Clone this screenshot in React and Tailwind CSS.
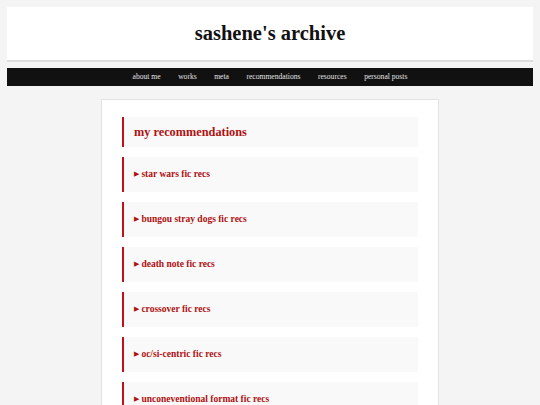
const navItems = ['about me', 'works', 'meta', 'recommendations', 'resources', 'personal posts'];

const recs = [
  'star wars fic recs',
  'bungou stray dogs fic recs',
  'death note fic recs',
  'crossover fic recs',
  'oc/si-centric fic recs',
  'unconeventional format fic recs',
];

const serif = { fontFamily: '"Liberation Serif", "DejaVu Serif", serif' };

export default function App() {
  return (
    <div className="h-screen overflow-hidden bg-[#f4f4f4] px-[7px] pt-[7px]" style={serif}>
      <header className="flex h-[55px] items-center justify-center border-b-2 border-[#dddddd] bg-white">
        <h1 className="text-[20.5px] font-bold leading-none text-[#111]">sashene's archive</h1>
      </header>

      <nav className="mt-[6px] flex h-[18px] items-center justify-center gap-[17.5px] bg-[#111] text-[7.6px] text-[#e4e4e4]">
        {navItems.map((item) => (
          <span key={item}>{item}</span>
        ))}
      </nav>

      <main className="mx-auto mt-[13px] w-[338px] border border-[#e2e2e2] bg-white px-[20px] pt-[17px] pb-6">
        <div className="flex flex-col gap-[10px]">
          <div className="flex h-[30px] items-center border-l-2 border-[#c0101a] bg-[#f9f9f9] pl-[10px]">
            <h2 className="text-[12.3px] font-bold text-[#b01010]">my recommendations</h2>
          </div>
          {recs.map((rec) => (
            <div
              key={rec}
              className="flex h-[35px] items-center border-l-2 border-[#c0101a] bg-[#f9f9f9] pl-[10px] text-[9.5px] font-bold text-[#b01010]"
            >
              <span className="mr-[2px] text-[7px]">▶</span>
              {rec}
            </div>
          ))}
        </div>
      </main>
    </div>
  );
}
